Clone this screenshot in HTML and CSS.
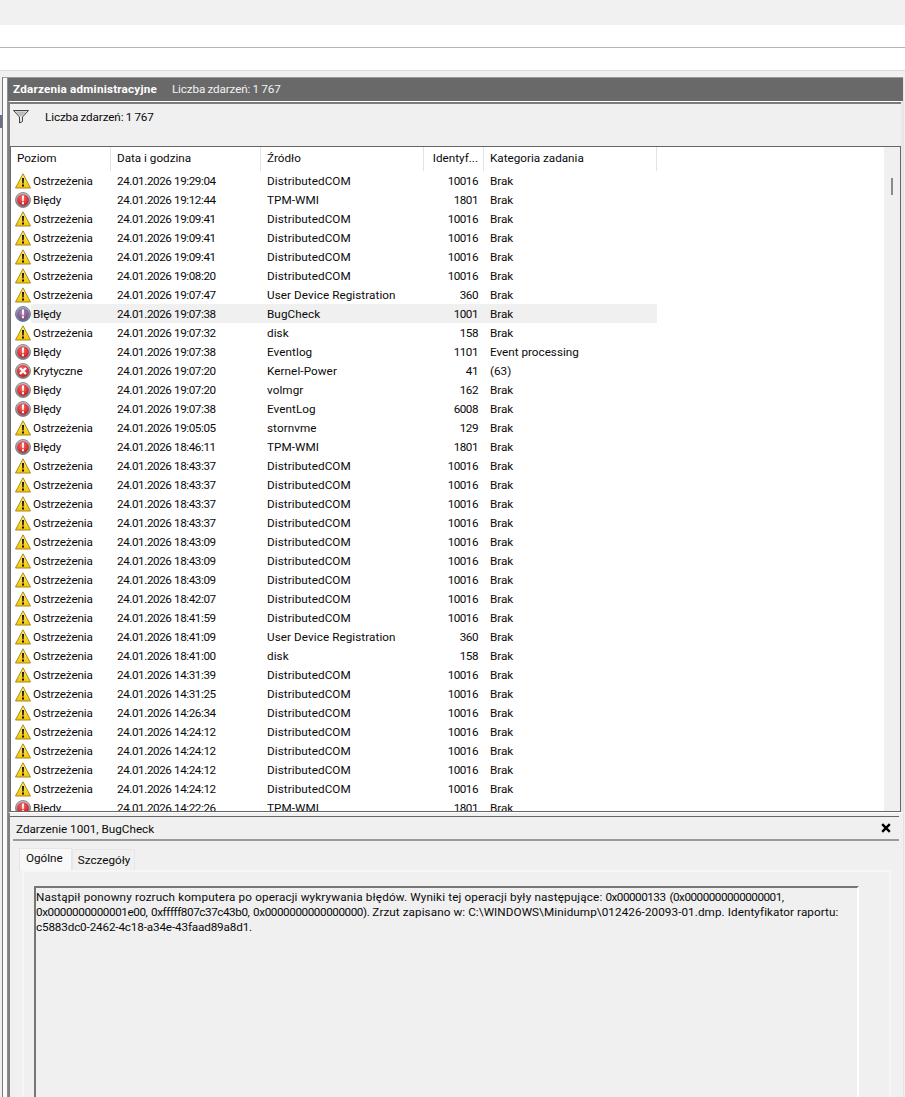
FILE: index.html
```html
<!DOCTYPE html>
<html lang="pl">
<head>
<meta charset="utf-8">
<title>Zdarzenia administracyjne</title>
<link rel="stylesheet" href="styles.css">
</head>
<body>
<svg class="defs" width="0" height="0" aria-hidden="true">
  <defs>
    <linearGradient id="gy" x1="0" y1="0" x2="0" y2="1"><stop offset="0" stop-color="#fff27a"/><stop offset="1" stop-color="#f5c400"/></linearGradient>
    <radialGradient id="gr" cx=".45" cy=".35" r=".75"><stop offset="0" stop-color="#ff6a6a"/><stop offset="1" stop-color="#c40d12"/></radialGradient>
    <linearGradient id="gg" x1="0" y1="0" x2="0" y2="1"><stop offset="0" stop-color="#c4c4c8"/><stop offset="1" stop-color="#77777c"/></linearGradient>
    <radialGradient id="gp" cx=".45" cy=".35" r=".75"><stop offset="0" stop-color="#a88ab8"/><stop offset="1" stop-color="#7b3f6f"/></radialGradient>
    <linearGradient id="gb" x1="0" y1="0" x2="0" y2="1"><stop offset="0" stop-color="#a9b6d0"/><stop offset="1" stop-color="#5c6c94"/></linearGradient>
    <symbol id="warn" viewBox="0 0 16 16">
      <path d="M8 .8 15.5 15H.5Z" fill="url(#gy)" stroke="#a88a1e" stroke-linejoin="round"/>
      <path d="M7 5h2l-.3 5.5H7.3Z" fill="#111"/>
      <rect x="7" y="11.5" width="2" height="2" fill="#111"/>
    </symbol>
    <symbol id="err" viewBox="0 0 16 16">
      <circle cx="8" cy="8" r="7.5" fill="url(#gg)" stroke="#77777c" stroke-width=".8"/>
      <circle cx="8" cy="8" r="5.8" fill="url(#gr)"/>
      <path d="M6.9 3.4h2.2l-.4 5.8H7.3Z" fill="#fff"/>
      <rect x="7" y="10.2" width="2" height="2" fill="#fff"/>
    </symbol>
    <symbol id="errsel" viewBox="0 0 16 16">
      <circle cx="8" cy="8" r="7.5" fill="url(#gb)" stroke="#5c6c94" stroke-width=".8"/>
      <circle cx="8" cy="8" r="5.8" fill="url(#gp)"/>
      <path d="M6.9 3.4h2.2l-.4 5.8H7.3Z" fill="#fff"/>
      <rect x="7" y="10.2" width="2" height="2" fill="#fff"/>
    </symbol>
    <symbol id="crit" viewBox="0 0 16 16">
      <circle cx="8" cy="8" r="7.5" fill="url(#gg)" stroke="#77777c" stroke-width=".8"/>
      <circle cx="8" cy="8" r="6" fill="url(#gr)"/>
      <path d="M5 5l6 6M11 5l-6 6" stroke="#fff" stroke-width="2.3"/>
    </symbol>
  </defs>
</svg>

<div class="bar bar-menu"></div>
<div class="bar bar-tools"></div>
<div class="bar bar-extra"></div>

<div class="workspace">
  <div class="side-pane"><span class="side-mark"></span></div>
  <main class="main-pane">
    <header class="view-title">
      <strong>Zdarzenia administracyjne</strong>
      <span class="count">Liczba zdarzeń: 1 767</span>
    </header>
    <section class="events">
      <div class="filter-bar">
        <svg class="funnel" width="16" height="14" viewBox="0 0 16 14" aria-hidden="true">
          <path d="M.5.5h15L9.5 7v4.5L6.5 13V7Z" fill="#e4e4e4" stroke="#444"/>
          <path d="M2.5 1.5h11L9 6H7Z" fill="#bbb"/>
        </svg>
        <span class="count">Liczba zdarzeń: 1 767</span>
      </div>
      <div class="list-frame">
        <div class="list">
          <div class="row head">
            <div class="c c-level">Poziom</div>
            <div class="c c-date">Data i godzina</div>
            <div class="c c-src">Źródło</div>
            <div class="c c-id">Identyf...</div>
            <div class="c c-cat">Kategoria zadania</div>
          </div>
          <div class="row"><div class="c c-level"><svg class="ic"><use href="#warn"/></svg>Ostrzeżenia</div><div class="c c-date">24.01.2026 19:29:04</div><div class="c c-src">DistributedCOM</div><div class="c c-id">10016</div><div class="c c-cat">Brak</div></div>
          <div class="row"><div class="c c-level"><svg class="ic"><use href="#err"/></svg>Błędy</div><div class="c c-date">24.01.2026 19:12:44</div><div class="c c-src">TPM-WMI</div><div class="c c-id">1801</div><div class="c c-cat">Brak</div></div>
          <div class="row"><div class="c c-level"><svg class="ic"><use href="#warn"/></svg>Ostrzeżenia</div><div class="c c-date">24.01.2026 19:09:41</div><div class="c c-src">DistributedCOM</div><div class="c c-id">10016</div><div class="c c-cat">Brak</div></div>
          <div class="row"><div class="c c-level"><svg class="ic"><use href="#warn"/></svg>Ostrzeżenia</div><div class="c c-date">24.01.2026 19:09:41</div><div class="c c-src">DistributedCOM</div><div class="c c-id">10016</div><div class="c c-cat">Brak</div></div>
          <div class="row"><div class="c c-level"><svg class="ic"><use href="#warn"/></svg>Ostrzeżenia</div><div class="c c-date">24.01.2026 19:09:41</div><div class="c c-src">DistributedCOM</div><div class="c c-id">10016</div><div class="c c-cat">Brak</div></div>
          <div class="row"><div class="c c-level"><svg class="ic"><use href="#warn"/></svg>Ostrzeżenia</div><div class="c c-date">24.01.2026 19:08:20</div><div class="c c-src">DistributedCOM</div><div class="c c-id">10016</div><div class="c c-cat">Brak</div></div>
          <div class="row"><div class="c c-level"><svg class="ic"><use href="#warn"/></svg>Ostrzeżenia</div><div class="c c-date">24.01.2026 19:07:47</div><div class="c c-src">User Device Registration</div><div class="c c-id">360</div><div class="c c-cat">Brak</div></div>
          <div class="row selected"><div class="c c-level"><svg class="ic"><use href="#errsel"/></svg><span class="sel-text">Błędy</span></div><div class="c c-date">24.01.2026 19:07:38</div><div class="c c-src">BugCheck</div><div class="c c-id">1001</div><div class="c c-cat">Brak</div></div>
          <div class="row"><div class="c c-level"><svg class="ic"><use href="#warn"/></svg>Ostrzeżenia</div><div class="c c-date">24.01.2026 19:07:32</div><div class="c c-src">disk</div><div class="c c-id">158</div><div class="c c-cat">Brak</div></div>
          <div class="row"><div class="c c-level"><svg class="ic"><use href="#err"/></svg>Błędy</div><div class="c c-date">24.01.2026 19:07:38</div><div class="c c-src">Eventlog</div><div class="c c-id">1101</div><div class="c c-cat">Event processing</div></div>
          <div class="row"><div class="c c-level"><svg class="ic"><use href="#crit"/></svg>Krytyczne</div><div class="c c-date">24.01.2026 19:07:20</div><div class="c c-src">Kernel-Power</div><div class="c c-id">41</div><div class="c c-cat">(63)</div></div>
          <div class="row"><div class="c c-level"><svg class="ic"><use href="#err"/></svg>Błędy</div><div class="c c-date">24.01.2026 19:07:20</div><div class="c c-src">volmgr</div><div class="c c-id">162</div><div class="c c-cat">Brak</div></div>
          <div class="row"><div class="c c-level"><svg class="ic"><use href="#err"/></svg>Błędy</div><div class="c c-date">24.01.2026 19:07:38</div><div class="c c-src">EventLog</div><div class="c c-id">6008</div><div class="c c-cat">Brak</div></div>
          <div class="row"><div class="c c-level"><svg class="ic"><use href="#warn"/></svg>Ostrzeżenia</div><div class="c c-date">24.01.2026 19:05:05</div><div class="c c-src">stornvme</div><div class="c c-id">129</div><div class="c c-cat">Brak</div></div>
          <div class="row"><div class="c c-level"><svg class="ic"><use href="#err"/></svg>Błędy</div><div class="c c-date">24.01.2026 18:46:11</div><div class="c c-src">TPM-WMI</div><div class="c c-id">1801</div><div class="c c-cat">Brak</div></div>
          <div class="row"><div class="c c-level"><svg class="ic"><use href="#warn"/></svg>Ostrzeżenia</div><div class="c c-date">24.01.2026 18:43:37</div><div class="c c-src">DistributedCOM</div><div class="c c-id">10016</div><div class="c c-cat">Brak</div></div>
          <div class="row"><div class="c c-level"><svg class="ic"><use href="#warn"/></svg>Ostrzeżenia</div><div class="c c-date">24.01.2026 18:43:37</div><div class="c c-src">DistributedCOM</div><div class="c c-id">10016</div><div class="c c-cat">Brak</div></div>
          <div class="row"><div class="c c-level"><svg class="ic"><use href="#warn"/></svg>Ostrzeżenia</div><div class="c c-date">24.01.2026 18:43:37</div><div class="c c-src">DistributedCOM</div><div class="c c-id">10016</div><div class="c c-cat">Brak</div></div>
          <div class="row"><div class="c c-level"><svg class="ic"><use href="#warn"/></svg>Ostrzeżenia</div><div class="c c-date">24.01.2026 18:43:37</div><div class="c c-src">DistributedCOM</div><div class="c c-id">10016</div><div class="c c-cat">Brak</div></div>
          <div class="row"><div class="c c-level"><svg class="ic"><use href="#warn"/></svg>Ostrzeżenia</div><div class="c c-date">24.01.2026 18:43:09</div><div class="c c-src">DistributedCOM</div><div class="c c-id">10016</div><div class="c c-cat">Brak</div></div>
          <div class="row"><div class="c c-level"><svg class="ic"><use href="#warn"/></svg>Ostrzeżenia</div><div class="c c-date">24.01.2026 18:43:09</div><div class="c c-src">DistributedCOM</div><div class="c c-id">10016</div><div class="c c-cat">Brak</div></div>
          <div class="row"><div class="c c-level"><svg class="ic"><use href="#warn"/></svg>Ostrzeżenia</div><div class="c c-date">24.01.2026 18:43:09</div><div class="c c-src">DistributedCOM</div><div class="c c-id">10016</div><div class="c c-cat">Brak</div></div>
          <div class="row"><div class="c c-level"><svg class="ic"><use href="#warn"/></svg>Ostrzeżenia</div><div class="c c-date">24.01.2026 18:42:07</div><div class="c c-src">DistributedCOM</div><div class="c c-id">10016</div><div class="c c-cat">Brak</div></div>
          <div class="row"><div class="c c-level"><svg class="ic"><use href="#warn"/></svg>Ostrzeżenia</div><div class="c c-date">24.01.2026 18:41:59</div><div class="c c-src">DistributedCOM</div><div class="c c-id">10016</div><div class="c c-cat">Brak</div></div>
          <div class="row"><div class="c c-level"><svg class="ic"><use href="#warn"/></svg>Ostrzeżenia</div><div class="c c-date">24.01.2026 18:41:09</div><div class="c c-src">User Device Registration</div><div class="c c-id">360</div><div class="c c-cat">Brak</div></div>
          <div class="row"><div class="c c-level"><svg class="ic"><use href="#warn"/></svg>Ostrzeżenia</div><div class="c c-date">24.01.2026 18:41:00</div><div class="c c-src">disk</div><div class="c c-id">158</div><div class="c c-cat">Brak</div></div>
          <div class="row"><div class="c c-level"><svg class="ic"><use href="#warn"/></svg>Ostrzeżenia</div><div class="c c-date">24.01.2026 14:31:39</div><div class="c c-src">DistributedCOM</div><div class="c c-id">10016</div><div class="c c-cat">Brak</div></div>
          <div class="row"><div class="c c-level"><svg class="ic"><use href="#warn"/></svg>Ostrzeżenia</div><div class="c c-date">24.01.2026 14:31:25</div><div class="c c-src">DistributedCOM</div><div class="c c-id">10016</div><div class="c c-cat">Brak</div></div>
          <div class="row"><div class="c c-level"><svg class="ic"><use href="#warn"/></svg>Ostrzeżenia</div><div class="c c-date">24.01.2026 14:26:34</div><div class="c c-src">DistributedCOM</div><div class="c c-id">10016</div><div class="c c-cat">Brak</div></div>
          <div class="row"><div class="c c-level"><svg class="ic"><use href="#warn"/></svg>Ostrzeżenia</div><div class="c c-date">24.01.2026 14:24:12</div><div class="c c-src">DistributedCOM</div><div class="c c-id">10016</div><div class="c c-cat">Brak</div></div>
          <div class="row"><div class="c c-level"><svg class="ic"><use href="#warn"/></svg>Ostrzeżenia</div><div class="c c-date">24.01.2026 14:24:12</div><div class="c c-src">DistributedCOM</div><div class="c c-id">10016</div><div class="c c-cat">Brak</div></div>
          <div class="row"><div class="c c-level"><svg class="ic"><use href="#warn"/></svg>Ostrzeżenia</div><div class="c c-date">24.01.2026 14:24:12</div><div class="c c-src">DistributedCOM</div><div class="c c-id">10016</div><div class="c c-cat">Brak</div></div>
          <div class="row"><div class="c c-level"><svg class="ic"><use href="#warn"/></svg>Ostrzeżenia</div><div class="c c-date">24.01.2026 14:24:12</div><div class="c c-src">DistributedCOM</div><div class="c c-id">10016</div><div class="c c-cat">Brak</div></div>
          <div class="row"><div class="c c-level"><svg class="ic"><use href="#err"/></svg>Błędy</div><div class="c c-date">24.01.2026 14:22:26</div><div class="c c-src">TPM-WMI</div><div class="c c-id">1801</div><div class="c c-cat">Brak</div></div>
        </div>
        <div class="scrollbar"><div class="thumb"></div></div>
      </div>
    </section>
    <section class="detail">
      <div class="detail-title">
        <span>Zdarzenie 1001, BugCheck</span>
        <svg class="close" width="10" height="10" viewBox="0 0 10 10" aria-hidden="true"><path d="M1.2 1.2l7.6 7.6M8.8 1.2 1.2 8.8" stroke="#000" stroke-width="2.4"/></svg>
      </div>
      <div class="tabs">
        <div class="tab active">Ogólne</div>
        <div class="tab">Szczegóły</div>
      </div>
      <div class="tab-body">
        <div class="message"><span class="lead">Nastąpił ponowny rozruch komputera po operacji wykrywania błędów. Wyniki tej operacji były następujące: </span><span class="hex-first">0x00000133 (0x0000000000000001,</span><br><span class="hex">0x0000000000001e00, 0xfffff807c37c43b0, 0x0000000000000000).</span> Zrzut zapisano w: C:\WINDOWS\Minidump\012426-20093-01.dmp. Identyfikator raportu:<br><span class="uuid">c5883dc0-2462-4c18-a34e-43faad89a8d1.</span></div>
      </div>
    </section>
  </main>
</div>
</body>
</html>
```
FILE: styles.css
```css
* { box-sizing: border-box; }
html, body { margin: 0; height: 100%; overflow: hidden; }
body {
  display: flex;
  flex-direction: column;
  background: #f0f0f0;
  color: #0a0a0a;
  font: 11.7px/19px Roboto, "Liberation Sans", sans-serif;
}
.defs { position: absolute; }

.bar { flex: none; }
.bar-menu { height: 25px; background: #f1f1f1; }
.bar-tools { height: 23px; background: #fff; border-bottom: 1px solid #b4b4b4; }
.bar-extra { height: 23px; background: #fff; border-bottom: 1px solid #dcdcdc; }

.workspace {
  flex: 1;
  min-height: 0;
  display: flex;
  padding-top: 6px;
  background: #f0f0f0;
}
.side-pane {
  flex: none;
  width: 6px;
  margin-left: 2px;
  border-left: 1px solid #7a7a7a;
  border-right: 1px solid #8c8c8c;
  border-top: 1px solid #a0a0a0;
  background: #fafafa;
  position: relative;
}
.side-mark {
  position: absolute;
  left: -3px;
  top: 37px;
  width: 2px;
  height: 13px;
  background: #6b6f8a;
}

.main-pane {
  flex: 1;
  min-width: 0;
  display: flex;
  flex-direction: column;
  border-right: 1px solid #e4e4e4;
  margin-right: 1px;
}
.view-title {
  flex: none;
  height: 24px;
  display: flex;
  gap: 15px;
  align-items: center;
  padding: 0 5px 2px;
  background: #696969;
  border-top: 1px solid #9a9a9a;
  color: #f2f2f2;
  line-height: 20px;
}
.view-title strong { color: #fff; font-weight: 700; letter-spacing: .2px; }
.count { letter-spacing: -.12px; word-spacing: -.5px; }

.events {
  flex: none;
  height: 711px;
  display: flex;
  flex-direction: column;
  border-top: 1px solid #fff;
  border-left: 2px solid #808080;
  border-right: 2px solid #e8e8e8;
}
.filter-bar {
  flex: none;
  height: 45px;
  display: flex;
  align-items: flex-start;
  gap: 15px;
  padding: 4px 3px;
  background: #f0f0f0;
  border-top: 2px solid #7c7c7c;
  border-bottom: 1px solid #666;
}
.funnel { flex: none; margin-top: 2px; margin-right: 1px; }

.list-frame {
  flex: 1;
  min-height: 0;
  display: flex;
  background: #fff;
  border-left: 1px solid #6a6a6a;
  border-right: 1px solid #666;
  border-bottom: 1px solid #666;
}
.list { flex: 1; min-width: 0; overflow: hidden; }
.scrollbar { flex: none; width: 16px; background: #f0f0f0; padding: 31px 7px 0 7px; }
.thumb { width: 2px; height: 17px; background: #8b8b8b; }

.row { display: flex; height: 19px; width: 646px; }
.row.head { height: 24px; }
.c { flex: none; padding: 1px 6px 0; white-space: nowrap; overflow: hidden; }
.head .c { padding-top: 0; border-right: 1px solid #e3e3e3; line-height: 22px; }
.c-level { width: 100px; display: flex; align-items: flex-start; padding: 1px 0 0 4px; letter-spacing: -.15px; }
.head .c-level { padding-left: 6px; letter-spacing: 0; }
.c-date { width: 150px; letter-spacing: -.42px; }
.c-src { width: 163px; letter-spacing: .08px; }
.c-id { width: 60px; text-align: right; padding-right: 6px; letter-spacing: -.5px; }
.c-cat { width: 173px; }
.head .c-date, .head .c-src, .head .c-id { letter-spacing: 0; }
.head .c-id { padding-right: 5px; }
.ic { flex: none; width: 16px; height: 16px; margin: .5px 2px 0 0; }
.selected .c { background: #f0f0f0; }
.selected .c-level { background: linear-gradient(90deg, #fff 20px, #f0f0f0 20px); }

.detail {
  flex: 1;
  min-height: 0;
  display: flex;
  flex-direction: column;
  border-left: 2px solid #808080;
  background: #f0f0f0;
  border-top: 1px solid #fff;
}
.detail-title {
  flex: none;
  height: 24px;
  margin-top: 3px;
  margin-right: 4px;
  display: flex;
  align-items: center;
  justify-content: space-between;
  padding: 1px 9px 0 6px;
  border-top: 1px solid #666;
  position: relative;
}
.detail-title::after {
  content: "";
  position: absolute;
  left: 3px;
  right: 0;
  bottom: -1px;
  height: 2px;
  background: #9a9a9a;
}
.close { flex: none; margin: -2px -1px 0 0; }

.tabs {
  flex: none;
  display: flex;
  align-items: flex-end;
  height: 30px;
  margin-left: 9px;
}
.tab {
  height: 21px;
  padding: 0 4px 0 5px;
  line-height: 20px;
  background: #f0f0f0;
  border: 1px solid #e6e6e6;
  border-bottom: 0;
}
.tab.active { height: 22px; padding: 0 8px 0 6px; background: #f8f8f8; line-height: 19px; }

.tab-body {
  flex: 1;
  min-height: 0;
  margin: 0 12px;
  padding: 14px 30px 0 10px;
  border: 2px solid #f6f6f6;
  border-bottom: 0;
  background: #f0f0f0;
}
.message {
  height: 100%;
  padding: 2px 0 0;
  line-height: 15px;
  letter-spacing: .08px;
  border-top: 2px solid #767676;
  border-left: 2px solid #767676;
  border-right: 2px solid #fff;
  white-space: nowrap;
  overflow: hidden;
}
.lead { letter-spacing: .15px; }
.hex-first { letter-spacing: -.48px; word-spacing: 1.5px; }
.hex { letter-spacing: -.42px; word-spacing: 1.2px; }
.uuid { letter-spacing: -.14px; }
```
